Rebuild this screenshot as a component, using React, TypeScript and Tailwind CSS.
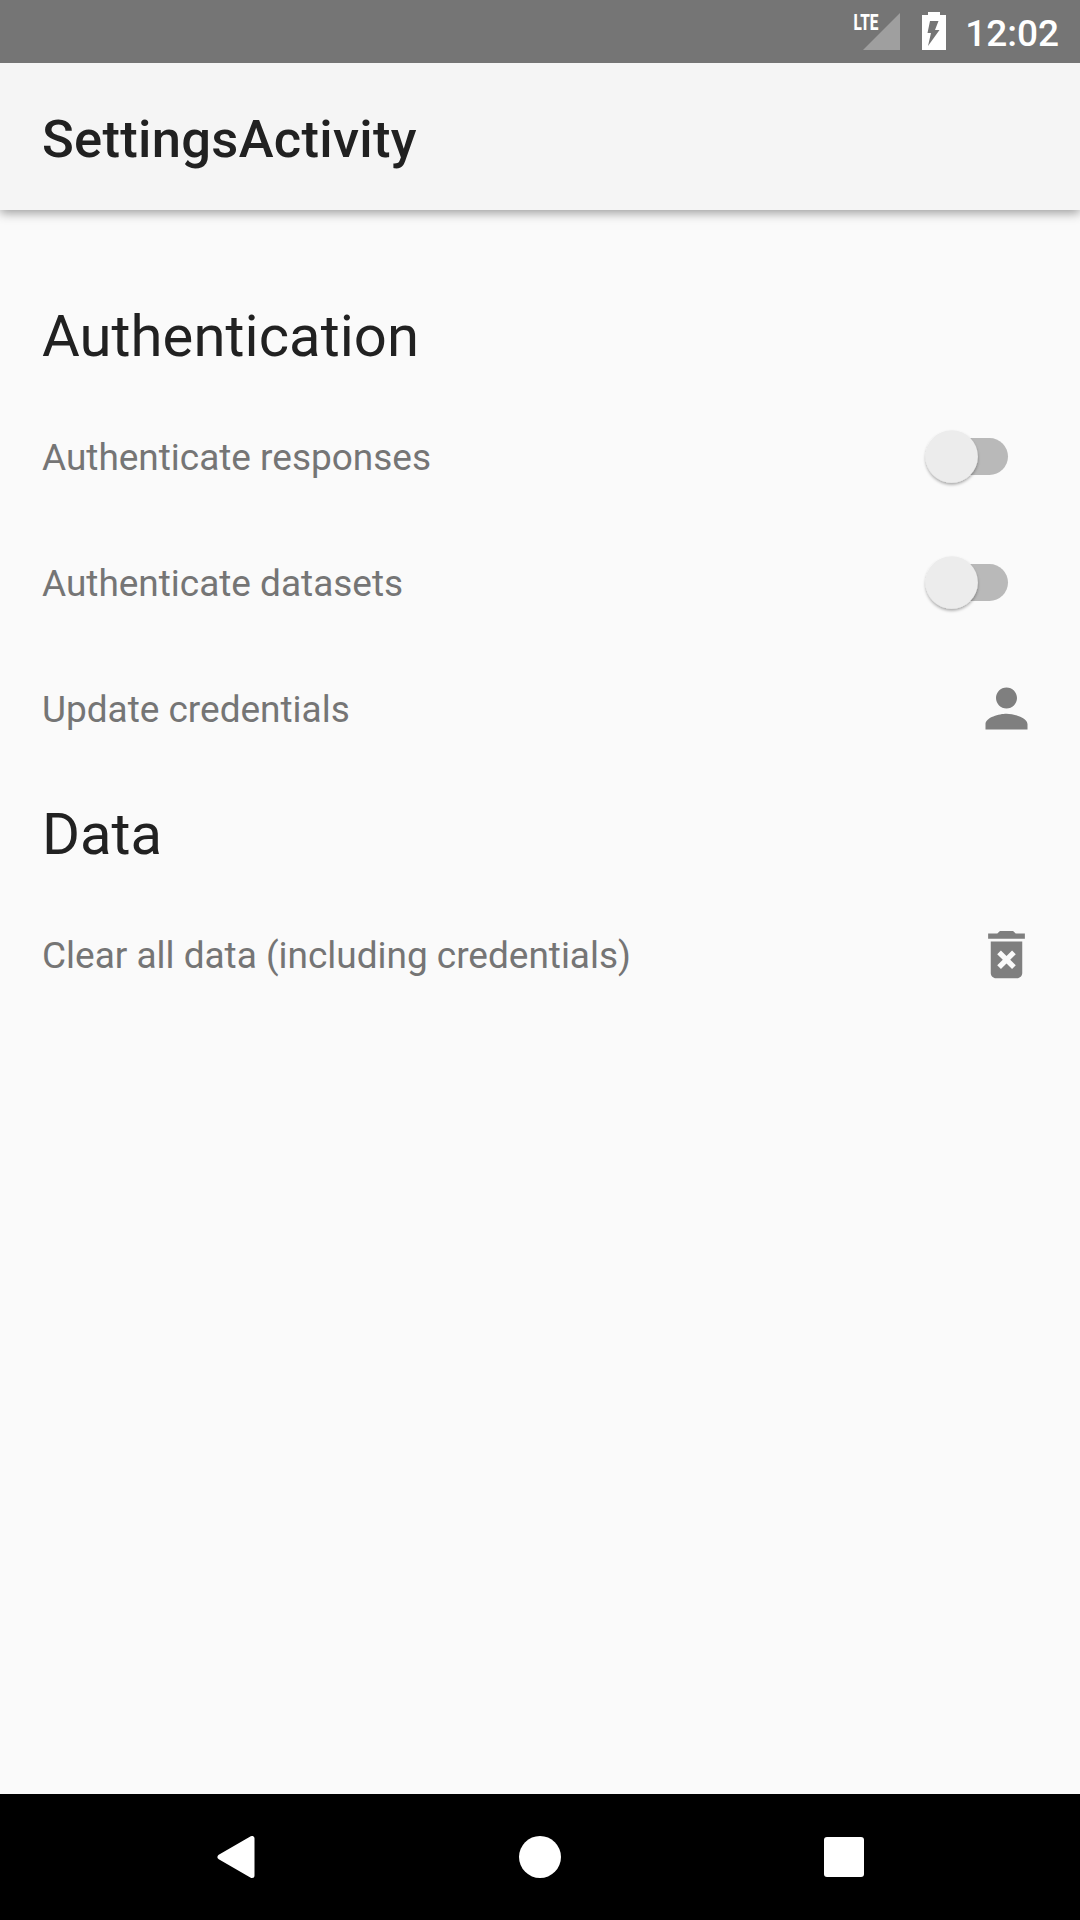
import React from 'react';

function Toggle() {
  return (
    <svg className="mr-[63px] h-[72px] w-[108px]" viewBox="0 0 108 72" aria-hidden="true">
      <defs>
        <filter id="thumb" x="-30%" y="-30%" width="160%" height="160%">
          <feDropShadow dx="0" dy="2" stdDeviation="1.8" floodColor="#000" floodOpacity="0.32" />
        </filter>
      </defs>
      <rect x="26" y="17" width="73" height="37" rx="18.5" fill="#b9b9b9" />
      <circle cx="42.7" cy="35.5" r="26.2" fill="#ececec" filter="url(#thumb)" />
    </svg>
  );
}

function RowIcon({ d }: { d: string }) {
  return (
    <svg className="mb-0.5 mr-[42px] h-[63px] w-[63px]" viewBox="0 0 24 24" fill="#7f7f7f" aria-hidden="true">
      <path d={d} />
    </svg>
  );
}

const PERSON =
  'M12 12c2.21 0 4-1.79 4-4s-1.79-4-4-4-4 1.79-4 4 1.79 4 4 4zm0 2c-2.67 0-8 1.34-8 4v2h16v-2c0-2.66-5.33-4-8-4z';
const DELETE_FOREVER =
  'M6 19c0 1.1.9 2 2 2h8c1.1 0 2-.9 2-2V7H6v12zm2.46-7.12l1.41-1.41L12 12.59l2.12-2.12 1.41 1.41L13.41 14l2.12 2.12-1.41 1.41L12 15.41l-2.12 2.12-1.41-1.41L10.59 14l-2.13-2.12zM15.5 4l-1-1h-5l-1 1H5v2h14V4z';

function Row({ label, children }: { label: string; children: React.ReactNode }) {
  return (
    <div className="flex h-[126px] items-center justify-between pl-[42px]">
      <span className="pt-0.5 text-[37px] leading-[44px] tracking-[-0.02px] text-[#757575]">{label}</span>
      {children}
    </div>
  );
}

export default function App() {
  return (
    <div className="flex h-[1920px] w-[1080px] flex-col overflow-hidden bg-[#fafafa] font-['Roboto',sans-serif]">
      <header className="z-20 flex h-[63px] items-center justify-end bg-[#757575] pr-[21px] text-white">
        <svg className="h-[63px] w-[100px]" viewBox="850 0 100 63" aria-hidden="true">
          <path d="M900 13V50H863Z" fill="#9f9f9f" />
          <text
            x="853.5"
            y="30"
            fontSize="22.5"
            fontWeight="800"
            textLength="25"
            lengthAdjust="spacingAndGlyphs"
            fill="#fff"
          >
            LTE
          </text>
          <path
            fillRule="evenodd"
            d="M940 12H928V15H922V50H946V15H940ZM930 21H938.5L935 30H939.5L928 46L931 33H927.5Z"
            fill="#fff"
          />
        </svg>
        <span className="ml-[15px] pt-[4px] text-[37px] font-medium leading-[44px]">12:02</span>
      </header>
      <div className="z-10 flex h-[147px] items-center bg-[#f5f5f5] pl-[42px] pt-[5px] shadow-[0_3px_10px_rgba(0,0,0,0.38)]">
        <h1 className="text-[52.5px] font-medium leading-[62px] tracking-[0.3px] text-[#212121]">SettingsActivity</h1>
      </div>
      <main className="flex-1 pt-[84px]">
        <h2 className="mb-4 pl-[42px] text-[58px] leading-[84px] tracking-[0.05px] text-[#212121]">Authentication</h2>
        <Row label="Authenticate responses"><Toggle /></Row>
        <Row label="Authenticate datasets"><Toggle /></Row>
        <Row label="Update credentials"><RowIcon d={PERSON} /></Row>
        <h2 className="mb-4 mt-5 pl-[42px] text-[58px] leading-[84px] text-[#212121]">Data</h2>
        <Row label="Clear all data (including credentials)"><RowIcon d={DELETE_FOREVER} /></Row>
      </main>
      <nav className="flex h-[126px] items-center bg-black pl-[217px]">
        <svg className="h-[42px] w-[38px]" viewBox="0 0 38 42" aria-hidden="true">
          <path d="M3 21L35 2.5V39.5Z" fill="#fff" stroke="#fff" strokeWidth="5" strokeLinejoin="round" />
        </svg>
        <div className="ml-[264px] h-[42px] w-[42px] rounded-full bg-white" />
        <div className="ml-[263px] h-10 w-10 rounded-[3px] bg-white" />
      </nav>
    </div>
  );
}
